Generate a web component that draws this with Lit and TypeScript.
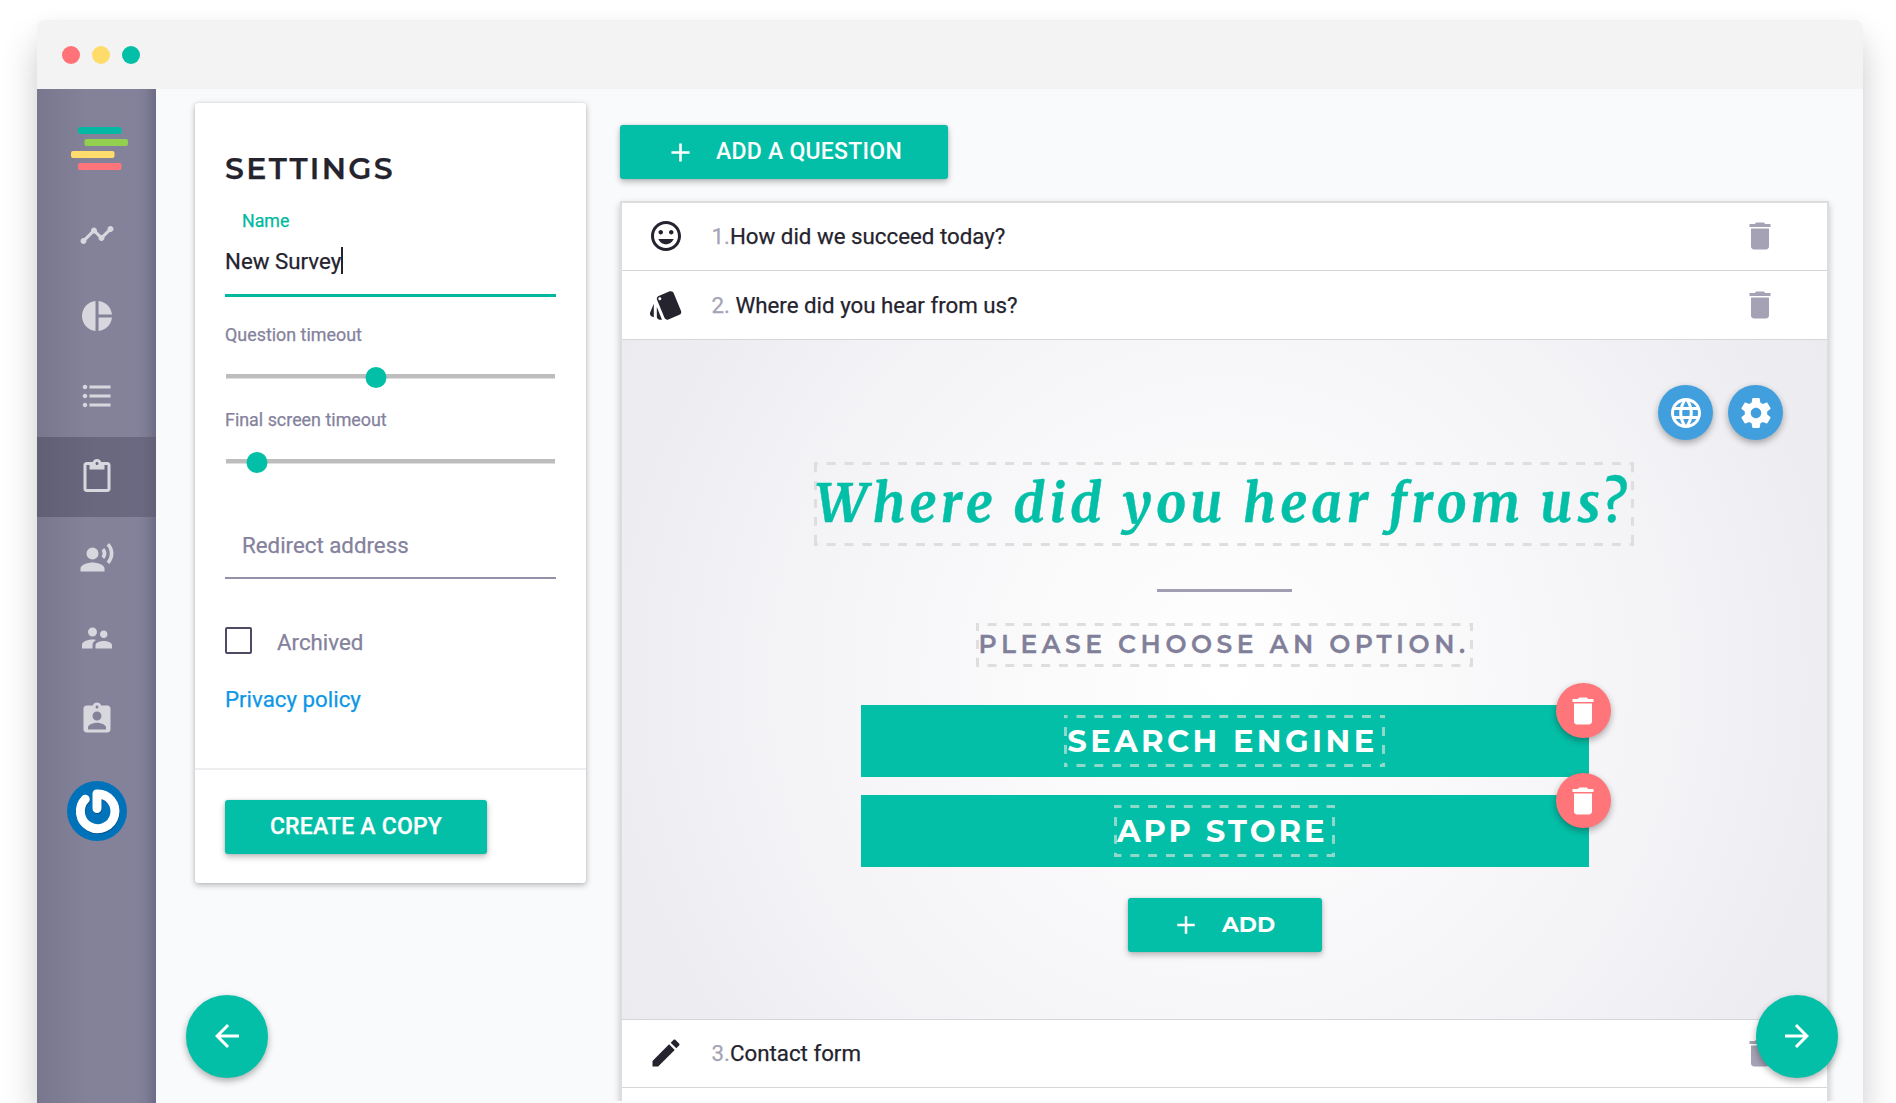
import { LitElement, html, css, svg, nothing } from "lit";
import { customElement, property } from "lit/decorators.js";
import { classMap } from "lit/directives/class-map.js";
import { styleMap } from "lit/directives/style-map.js";

const ICONS: Record<string, string> = {
  timeline:
    "M23 8c0 1.1-.9 2-2 2-.18 0-.35-.02-.51-.07l-3.56 3.55c.05.16.07.34.07.52 0 1.1-.9 2-2 2s-2-.9-2-2c0-.18.02-.36.07-.52l-2.55-2.55c-.16.05-.34.07-.52.07s-.36-.02-.52-.07l-4.55 4.56c.05.16.07.33.07.51 0 1.1-.9 2-2 2s-2-.9-2-2 .9-2 2-2c.18 0 .35.02.51.07l4.56-4.55C8.02 9.36 8 9.18 8 9c0-1.1.9-2 2-2s2 .9 2 2c0 .18-.02.36-.07.52l2.55 2.55c.16-.05.34-.07.52-.07s.36.02.52.07l3.55-3.56C19.02 8.35 19 8.18 19 8c0-1.1.9-2 2-2s2 .9 2 2z",
  pie: "M11 2v20c-5.07-.5-9-4.79-9-10s3.93-9.5 9-10zm2.03 0v8.99H22c-.47-4.74-4.24-8.52-8.97-8.99zm0 11.01V22c4.74-.47 8.5-4.25 8.97-8.99h-8.97z",
  list: "M4 10.5c-.83 0-1.5.67-1.5 1.5s.67 1.5 1.5 1.5 1.5-.67 1.5-1.5-.67-1.5-1.5-1.5zm0-6c-.83 0-1.5.67-1.5 1.5S3.17 7.5 4 7.5 5.5 6.83 5.5 6 4.83 4.5 4 4.5zm0 12c-.83 0-1.5.68-1.5 1.5s.68 1.5 1.5 1.5 1.5-.68 1.5-1.5-.67-1.5-1.5-1.5zM7 19h14v-2H7v2zm0-6h14v-2H7v2zm0-8v2h14V5H7z",
  clipboard:
    "M19 2h-4.18C14.4.84 13.3 0 12 0c-1.3 0-2.4.84-2.82 2H5c-1.1 0-2 .9-2 2v16c0 1.1.9 2 2 2h14c1.1 0 2-.9 2-2V4c0-1.1-.9-2-2-2zm-7 0c.55 0 1 .45 1 1s-.45 1-1 1-1-.45-1-1 .45-1 1-1zm7 18H5V4h2v3h10V4h2v16z",
  voice:
    "M9 5a4 4 0 1 0 0 8 4 4 0 0 0 0-8zM9 15c-2.67 0-8 1.34-8 4v2h16v-2c0-2.66-5.33-4-8-4zm7.76-9.64l-1.68 1.69c.84 1.18.84 2.71 0 3.89l1.68 1.69c2.02-2.02 2.02-5.07 0-7.27zM20.07 2l-1.63 1.63c2.77 3.02 2.77 7.56 0 10.74L20.07 16c3.9-3.89 3.91-9.95 0-14z",
  people:
    "M16.5 12c1.38 0 2.49-1.12 2.49-2.5S17.88 7 16.5 7C15.12 7 14 8.12 14 9.5s1.12 2.5 2.5 2.5zM9 11c1.66 0 2.99-1.34 2.99-3S10.66 5 9 5C7.34 5 6 6.34 6 8s1.34 3 3 3zm7.5 3c-1.83 0-5.5.92-5.5 2.75V19h11v-2.25c0-1.83-3.67-2.75-5.5-2.75zM9 13c-2.33 0-7 1.17-7 3.5V19h7v-2.25c0-.85.33-2.34 2.37-3.47C10.5 13.1 9.66 13 9 13z",
  badge:
    "M19 3h-4.18C14.4 1.84 13.3 1 12 1c-1.3 0-2.4.84-2.82 2H5c-1.1 0-2 .9-2 2v14c0 1.1.9 2 2 2h14c1.1 0 2-.9 2-2V5c0-1.1-.9-2-2-2zm-7 0c.55 0 1 .45 1 1s-.45 1-1 1-1-.45-1-1 .45-1 1-1zm0 4c1.66 0 3 1.34 3 3s-1.34 3-3 3-3-1.34-3-3 1.34-3 3-3zm6 12H6v-1.4c0-2 4-3.1 6-3.1s6 1.1 6 3.1V19z",
  mood: "M11.99 2C6.47 2 2 6.48 2 12s4.47 10 9.99 10C17.52 22 22 17.52 22 12S17.52 2 11.99 2zM12 20c-4.42 0-8-3.58-8-8s3.58-8 8-8 8 3.58 8 8-3.58 8-8 8zm3.5-9c.83 0 1.5-.67 1.5-1.5S16.33 8 15.5 8 14 8.67 14 9.5s.67 1.5 1.5 1.5zm-7 0c.83 0 1.5-.67 1.5-1.5S9.33 8 8.5 8 7 8.67 7 9.5 7.67 11 8.5 11zm3.5 6.5c2.33 0 4.31-1.46 5.11-3.5H6.89c.8 2.04 2.78 3.5 5.11 3.5z",
  cards:
    "M2.53 19.65l1.34.56v-9.03l-2.43 5.86c-.41 1.02.08 2.19 1.09 2.61zm19.5-3.7L17.07 3.98c-.31-.75-1.04-1.21-1.81-1.23-.26 0-.53.04-.79.15L7.1 5.95c-.75.31-1.21 1.03-1.23 1.8-.01.27.04.54.15.8l4.96 11.97c.31.76 1.05 1.22 1.83 1.23.26 0 .52-.05.77-.15l7.36-3.05c1.02-.42 1.51-1.59 1.09-2.6zM7.88 8.75c-.55 0-1-.45-1-1s.45-1 1-1 1 .45 1 1-.45 1-1 1zm-2 11c0 1.1.9 2 2 2h1.45l-3.45-8.34v6.34z",
  edit: "M3 17.25V21h3.75L17.81 9.94l-3.75-3.75L3 17.25zM20.71 7.04c.39-.39.39-1.02 0-1.41l-2.34-2.34c-.39-.39-1.02-.39-1.41 0l-1.83 1.83 3.75 3.75 1.83-1.83z",
  trash: "M6 19c0 1.1.9 2 2 2h8c1.1 0 2-.9 2-2V7H6v12zM19 4h-3.5l-1-1h-5l-1 1H5v2h14V4z",
  globe:
    "M11.99 2C6.47 2 2 6.48 2 12s4.47 10 9.99 10C17.52 22 22 17.52 22 12S17.52 2 11.99 2zm6.93 6h-2.95c-.32-1.25-.78-2.45-1.38-3.56 1.84.63 3.37 1.91 4.33 3.56zM12 4.04c.83 1.2 1.48 2.53 1.91 3.96h-3.82c.43-1.43 1.08-2.76 1.91-3.96zM4.26 14C4.1 13.36 4 12.69 4 12s.1-1.36.26-2h3.38c-.08.66-.14 1.32-.14 2 0 .68.06 1.34.14 2H4.26zm.82 2h2.95c.32 1.25.78 2.45 1.38 3.56-1.84-.63-3.37-1.9-4.33-3.56zm2.95-8H5.08c.96-1.66 2.49-2.93 4.33-3.56C8.81 5.55 8.35 6.75 8.03 8zM12 19.96c-.83-1.2-1.48-2.53-1.91-3.96h3.82c-.43 1.43-1.08 2.76-1.91 3.96zM14.34 14H9.66c-.09-.66-.16-1.32-.16-2 0-.68.07-1.35.16-2h4.68c.09.65.16 1.32.16 2 0 .68-.07 1.34-.16 2zm.25 5.56c.6-1.11 1.06-2.31 1.38-3.56h2.95c-.96 1.65-2.49 2.93-4.33 3.56zM16.36 14c.08-.66.14-1.32.14-2 0-.68-.06-1.34-.14-2h3.38c.16.64.26 1.31.26 2s-.1 1.36-.26 2h-3.38z",
  gear: "M19.43 12.98c.04-.32.07-.64.07-.98s-.03-.66-.07-.98l2.11-1.65c.19-.15.24-.42.12-.64l-2-3.46c-.12-.22-.39-.3-.61-.22l-2.49 1c-.52-.4-1.08-.73-1.69-.98l-.38-2.65C14.46 2.18 14.25 2 14 2h-4c-.25 0-.46.18-.49.42l-.38 2.65c-.61.25-1.17.59-1.69.98l-2.49-1c-.23-.09-.49 0-.61.22l-2 3.46c-.13.22-.07.49.12.64l2.11 1.65c-.04.32-.07.65-.07.98s.03.66.07.98l-2.11 1.65c-.19.15-.24.42-.12.64l2 3.46c.12.22.39.3.61.22l2.49-1c.52.4 1.08.73 1.69.98l.38 2.65c.03.24.24.42.49.42h4c.25 0 .46-.18.49-.42l.38-2.65c.61-.25 1.17-.59 1.69-.98l2.49 1c.23.09.49 0 .61-.22l2-3.46c.12-.22.07-.49-.12-.64l-2.11-1.65zM12 15.5c-1.93 0-3.5-1.57-3.5-3.5s1.57-3.5 3.5-3.5 3.5 1.57 3.5 3.5-1.57 3.5-3.5 3.5z",
  back: "M20 11H7.83l5.59-5.59L12 4l-8 8 8 8 1.41-1.41L7.83 13H20v-2z",
  forward: "M12 4l-1.41 1.41L16.17 11H4v2h12.17l-5.58 5.59L12 20l8-8z",
  add: "M19 13h-6v6h-2v-6H5v-2h6V5h2v6h6v2z",
};

const icon = (name: string, size = 36) =>
  html`<svg width=${size} height=${size} viewBox="0 0 24 24" fill="currentColor" aria-hidden="true">
    ${svg`<path d=${ICONS[name]}></path>`}
  </svg>`;

const shared = css`
  :host,
  * {
    box-sizing: border-box;
  }
  svg {
    display: block;
    flex: none;
  }
  .raised {
    display: inline-flex;
    align-items: center;
    height: 54px;
    padding: 0;
    border: 0;
    border-radius: 3px;
    background: #04bfa7;
    color: #fff;
    font: 500 23px/54px Roboto, sans-serif;
    white-space: nowrap;
    box-shadow: 0 3px 6px rgba(0, 0, 0, 0.26), 0 0 3px rgba(0, 0, 0, 0.12);
  }
  .round {
    display: flex;
    align-items: center;
    justify-content: center;
    width: 55px;
    height: 55px;
    padding: 0;
    border: 0;
    border-radius: 50%;
    color: #fff;
    box-shadow: 0 3px 7px rgba(0, 0, 0, 0.32);
  }
`;

@customElement("side-nav")
export class SideNav extends LitElement {
  static styles = [
    shared,
    css`
      :host {
        display: flex;
        flex-direction: column;
        align-items: center;
        width: 119px;
        flex: none;
        color: #d8d7de;
        background: linear-gradient(90deg, #78778d 0, #7d7c93 22px, #838299 50px, #83829a 100px, #7d7c94 109px, #6d6c86 119px);
      }
      .logo {
        margin: 38px 0 0 4px;
      }
      .items {
        width: 100%;
        margin-top: 24px;
      }
      .item {
        display: flex;
        align-items: center;
        justify-content: center;
        height: 80.6px;
      }
      .active {
        background: linear-gradient(90deg, #605f74 0, #69687f 60px, #6a6981 105px, #626178 119px);
      }
      .avatar {
        margin-top: 22px;
      }
    `,
  ];

  private entries = ["timeline", "pie", "list", "clipboard", "voice", "people", "badge"];

  render() {
    return html`
      <svg class="logo" width="58" height="44" viewBox="0 0 58 44">
        <rect x="8" y="0" width="43.5" height="7" rx="2" fill="#04b8a3"></rect>
        <rect x="14.5" y="12" width="43.5" height="7" rx="2" fill="#93d04f"></rect>
        <rect x="1" y="24" width="43.5" height="7" rx="2" fill="#ffdc6c"></rect>
        <rect x="8" y="36" width="43.5" height="7" rx="2" fill="#ff757a"></rect>
      </svg>
      <nav class="items">
        ${this.entries.map(
          (name) => html`<div class=${classMap({ item: true, active: name === "clipboard" })}>${icon(name)}</div>`
        )}
      </nav>
      <svg class="avatar" width="60" height="60" viewBox="0 0 60 60">
        <circle cx="30" cy="30" r="30" fill="#0072b9"></circle>
        <g fill="none" stroke-width="9" stroke-linecap="round" stroke-linejoin="round">
          <path d="M18.3 18.2A17.3 17.3 0 1 0 30 13V27.5" stroke="#00558f" transform="translate(.6 1)"></path>
          <path d="M18.3 18.2A17.3 17.3 0 1 0 30 13V27.5" stroke="#fff"></path>
        </g>
      </svg>
    `;
  }
}

@customElement("range-slider")
export class RangeSlider extends LitElement {
  @property({ type: Number }) value = 0;

  static styles = css`
    :host {
      display: flex;
      align-items: center;
      height: 21px;
      margin: 20px 1px 0 1px;
      background: linear-gradient(#bebdbe, #bebdbe) 0 7px / 100% 4.5px no-repeat;
    }
    .knob {
      width: 21px;
      height: 21px;
      border-radius: 50%;
      background: #04bfa7;
      transform: translateX(-50%);
    }
  `;

  render() {
    return html`<div class="knob" style=${styleMap({ marginLeft: `${this.value}%` })}></div>`;
  }
}

@customElement("settings-card")
export class SettingsCard extends LitElement {
  static styles = [
    shared,
    css`
      :host {
        display: flex;
        flex-direction: column;
        flex: none;
        width: 391px;
        height: 780px;
        margin-top: 14px;
        background: #fff;
        border-radius: 3px;
        box-shadow: 0 2px 6px rgba(0, 0, 0, 0.28), 0 0 2px rgba(0, 0, 0, 0.1);
        color: #84829c;
        font: 22.3px/32px Roboto, sans-serif;
        -webkit-text-stroke: 0.25px currentColor;
      }
      .body {
        flex: none;
        height: 667px;
        padding: 46px 30px 0;
        border-bottom: 2px solid #eeeef0;
      }
      h1 {
        margin: 0;
        color: #24232e;
        font: 600 30px/40px Montserrat, Lato, sans-serif;
        letter-spacing: 2.35px;
      }
      .floating {
        margin: 20px 0 0 17px;
        color: #04b8a0;
        font-size: 17.8px;
        line-height: 24px;
      }
      .value {
        display: flex;
        align-items: center;
        margin-top: 13px;
        height: 51px;
        padding-bottom: 19px;
        border-bottom: 3px solid #04b8a0;
        color: #24232e;
      }
      .caret {
        width: 1.5px;
        height: 27px;
        background: #24232e;
      }
      .label {
        font-size: 17.9px;
        line-height: 24px;
      }
      .question {
        margin-top: 26px;
      }
      .final {
        margin-top: 20px;
      }
      .redirect {
        margin-top: 56px;
        height: 50px;
        padding-left: 17px;
        border-bottom: 2px solid #9391a8;
      }
      .check {
        display: flex;
        align-items: center;
        gap: 25px;
        height: 32px;
        margin-top: 45px;
      }
      .box {
        width: 27px;
        height: 27px;
        border: 2.5px solid #4d4b63;
        border-radius: 2px;
      }
      .check span {
        padding-top: 3px;
      }
      .policy {
        margin-top: 27px;
        color: #0c97e6;
      }
      .footer {
        padding: 30px;
        line-height: 0;
      }
      .copy {
        width: 262px;
        justify-content: center;
        letter-spacing: 0.2px;
      }
    `,
  ];

  render() {
    return html`
      <div class="body">
        <h1>SETTINGS</h1>
        <div class="floating">Name</div>
        <div class="value"><span>New Survey</span><i class="caret"></i></div>
        <div class="label question">Question timeout</div>
        <range-slider value="45.7"></range-slider>
        <div class="label final">Final screen timeout</div>
        <range-slider value="9.5"></range-slider>
        <div class="redirect">Redirect address</div>
        <div class="check"><div class="box"></div><span>Archived</span></div>
        <div class="policy">Privacy policy</div>
      </div>
      <div class="footer"><button class="raised copy">CREATE A COPY</button></div>
    `;
  }
}

@customElement("question-row")
export class QuestionRow extends LitElement {
  @property() icon = "";
  @property() number = "";
  @property() label = "";

  static styles = [
    shared,
    css`
      :host {
        display: flex;
        flex: none;
        align-items: center;
        height: 68px;
        padding: 0 49px 1px 26px;
        border-bottom: 1px solid #d6d6d9;
        background: #fff;
        color: #24232e;
        font: 22.3px/32px Roboto, sans-serif;
        -webkit-text-stroke: 0.25px currentColor;
      }
      .label {
        flex: 1;
        margin-left: 27.5px;
        white-space: pre;
      }
      .number {
        color: #a5a3b6;
      }
      .trash {
        color: #a4a2b4;
      }
    `,
  ];

  render() {
    return html`
      ${this.icon ? icon(this.icon) : nothing}
      <div class="label"><span class="number">${this.number}</span>${this.label}</div>
      ${this.icon ? html`<div class="trash">${icon("trash")}</div>` : nothing}
    `;
  }
}

@customElement("question-preview")
export class QuestionPreview extends LitElement {
  static styles = [
    shared,
    css`
      :host {
        display: flex;
        flex: none;
        flex-direction: column;
        align-items: center;
        height: 680px;
        padding-top: 45px;
        border-bottom: 1px solid #d6d6d9;
        background: radial-gradient(circle at 50% 50%, #fff 0, #fafafb 200px, #f5f5f8 400px, #eeedf1 600px, #ebeaef 720px);
      }
      .tools {
        display: flex;
        align-self: flex-end;
        gap: 15px;
        margin-right: 44px;
      }
      .tool {
        background: #429fde;
      }
      .dashed {
        --dash: #dededf;
        --pitch: 17.85px;
        --shift: 0px;
        --h: linear-gradient(90deg, transparent 25%, var(--dash) 25% 75%, transparent 75%);
        --v: linear-gradient(transparent 25%, var(--dash) 25% 75%, transparent 75%);
        flex: none;
        text-align: left;
        white-space: nowrap;
        background-image: var(--h), var(--h), var(--v), var(--v);
        background-repeat: repeat-x, repeat-x, repeat-y, repeat-y;
        background-size: var(--pitch) 3px, var(--pitch) 3px, 3px var(--pitch), 3px var(--pitch);
        background-position: center top, center bottom, left calc(50% + var(--shift)), right calc(50% + var(--shift));
      }
      .title {
        width: 820.5px;
        height: 84px;
        margin: 22px 1px 0 0;
        padding-left: 2px;
        color: #04bfa7;
        font: italic 700 53px/83px Merriweather, "Liberation Serif", serif;
        letter-spacing: 4.42px;
        -webkit-text-stroke: 0.4px currentColor;
      }
      .rule {
        width: 134.5px;
        height: 3px;
        margin-top: 43px;
        background: #a09eb3;
      }
      .hint {
        width: 497px;
        height: 44px;
        margin-top: 31px;
        padding-left: 2.5px;
        color: #817f99;
        font: 600 25px/43px Montserrat, Lato, sans-serif;
        letter-spacing: 4.55px;
        -webkit-text-stroke: 0.3px currentColor;
      }
      .answers {
        display: flex;
        flex-direction: column;
        gap: 18px;
        width: 728px;
        margin-top: 38px;
      }
      .answer {
        position: relative;
        display: flex;
        align-items: center;
        justify-content: center;
        height: 72px;
        background: #04bfa7;
        color: #fff;
        font: 700 30.6px/53px Montserrat, Lato, sans-serif;
      }
      .answer .dashed {
        --dash: #8fd9cb;
        --shift: 8.9px;
        height: 52px;
        padding-left: 3px;
      }
      .remove {
        position: absolute;
        right: -22px;
        top: -22px;
        background: #ff7579;
      }
      .add {
        flex: none;
        width: 194px;
        margin-top: 31px;
        padding-left: 43px;
        font-family: Montserrat, Lato, sans-serif;
        font-size: 22px;
        font-weight: 700;
      }
      .add svg {
        margin-right: 21.5px;
      }
    `,
  ];

  private answers = [
    { text: "SEARCH ENGINE", width: 320.5, spacing: 3.45 },
    { text: "APP STORE", width: 221, spacing: 3.05 },
  ];

  render() {
    return html`
      <div class="tools">
        <button class="round tool">${icon("globe")}</button>
        <button class="round tool">${icon("gear")}</button>
      </div>
      <div class="dashed title">Where did you hear from us?</div>
      <div class="rule"></div>
      <div class="dashed hint">PLEASE CHOOSE AN OPTION.</div>
      <div class="answers">
        ${this.answers.map(
          (a) => html`<div class="answer">
            <div class="dashed" style=${styleMap({ width: `${a.width}px`, letterSpacing: `${a.spacing}px` })}>${a.text}</div>
            <button class="round remove">${icon("trash")}</button>
          </div>`
        )}
      </div>
      <button class="raised add">${icon("add", 30)}<span>ADD</span></button>
    `;
  }
}

@customElement("app-root")
export class AppRoot extends LitElement {
  static styles = [
    shared,
    css`
      :host {
        display: block;
        width: 1896px;
        height: 1103px;
        padding: 20px 33px 0 37px;
        overflow: hidden;
        background: #fff;
      }
      .window {
        position: relative;
        display: flex;
        flex-direction: column;
        height: 1083px;
        border-radius: 8px 8px 0 0;
        background: #f9fafc;
        box-shadow: 0 22px 36px rgba(0, 0, 0, 0.2), 0 0 20px rgba(0, 0, 0, 0.02);
      }
      .bar {
        display: flex;
        flex: none;
        align-items: center;
        gap: 12px;
        height: 69px;
        padding: 1px 0 0 25px;
        border-radius: 8px 8px 0 0;
        background: #f3f3f3;
      }
      .dot {
        width: 18px;
        height: 18px;
        border-radius: 50%;
      }
      .red {
        background: #ff7378;
      }
      .yellow {
        background: #ffdc6a;
      }
      .green {
        background: #04bfa7;
      }
      .main {
        display: flex;
        flex: 1;
        min-height: 0;
      }
      .content {
        display: flex;
        flex: 1;
        align-items: flex-start;
        gap: 34px;
        margin-bottom: 2px;
        padding-left: 39px;
        overflow: hidden;
      }
      .questions {
        flex: none;
        width: 1209px;
        padding-top: 36px;
      }
      .new {
        width: 328px;
        padding-left: 44.5px;
        letter-spacing: 0.25px;
      }
      .new svg {
        margin-right: 20.5px;
      }
      .list {
        display: flex;
        flex-direction: column;
        height: 930px;
        margin-top: 22px;
        border: 2px solid #dddddf;
        background: #fff;
        box-shadow: 0 3px 7px rgba(0, 0, 0, 0.22);
      }
      .tall {
        height: 69px;
      }
      .fab {
        position: absolute;
        top: 975px;
        width: 82.5px;
        height: 82.5px;
        background: #04bfa7;
      }
      .prev {
        left: 148.5px;
      }
      .next {
        left: 1718.5px;
      }
    `,
  ];

  render() {
    return html`
      <div class="window">
        <div class="bar">
          <i class="dot red"></i><i class="dot yellow"></i><i class="dot green"></i>
        </div>
        <div class="main">
          <side-nav></side-nav>
          <div class="content">
            <settings-card></settings-card>
            <div class="questions">
              <button class="raised new">${icon("add", 31)}<span>ADD A QUESTION</span></button>
              <div class="list">
                <question-row icon="mood" number="1." label="How did we succeed today?"></question-row>
                <question-row class="tall" icon="cards" number="2." label=" Where did you hear from us?"></question-row>
                <question-preview></question-preview>
                <question-row icon="edit" number="3." label="Contact form"></question-row>
              </div>
            </div>
          </div>
        </div>
        <button class="round fab prev">${icon("back")}</button>
        <button class="round fab next">${icon("forward")}</button>
      </div>
    `;
  }
}
